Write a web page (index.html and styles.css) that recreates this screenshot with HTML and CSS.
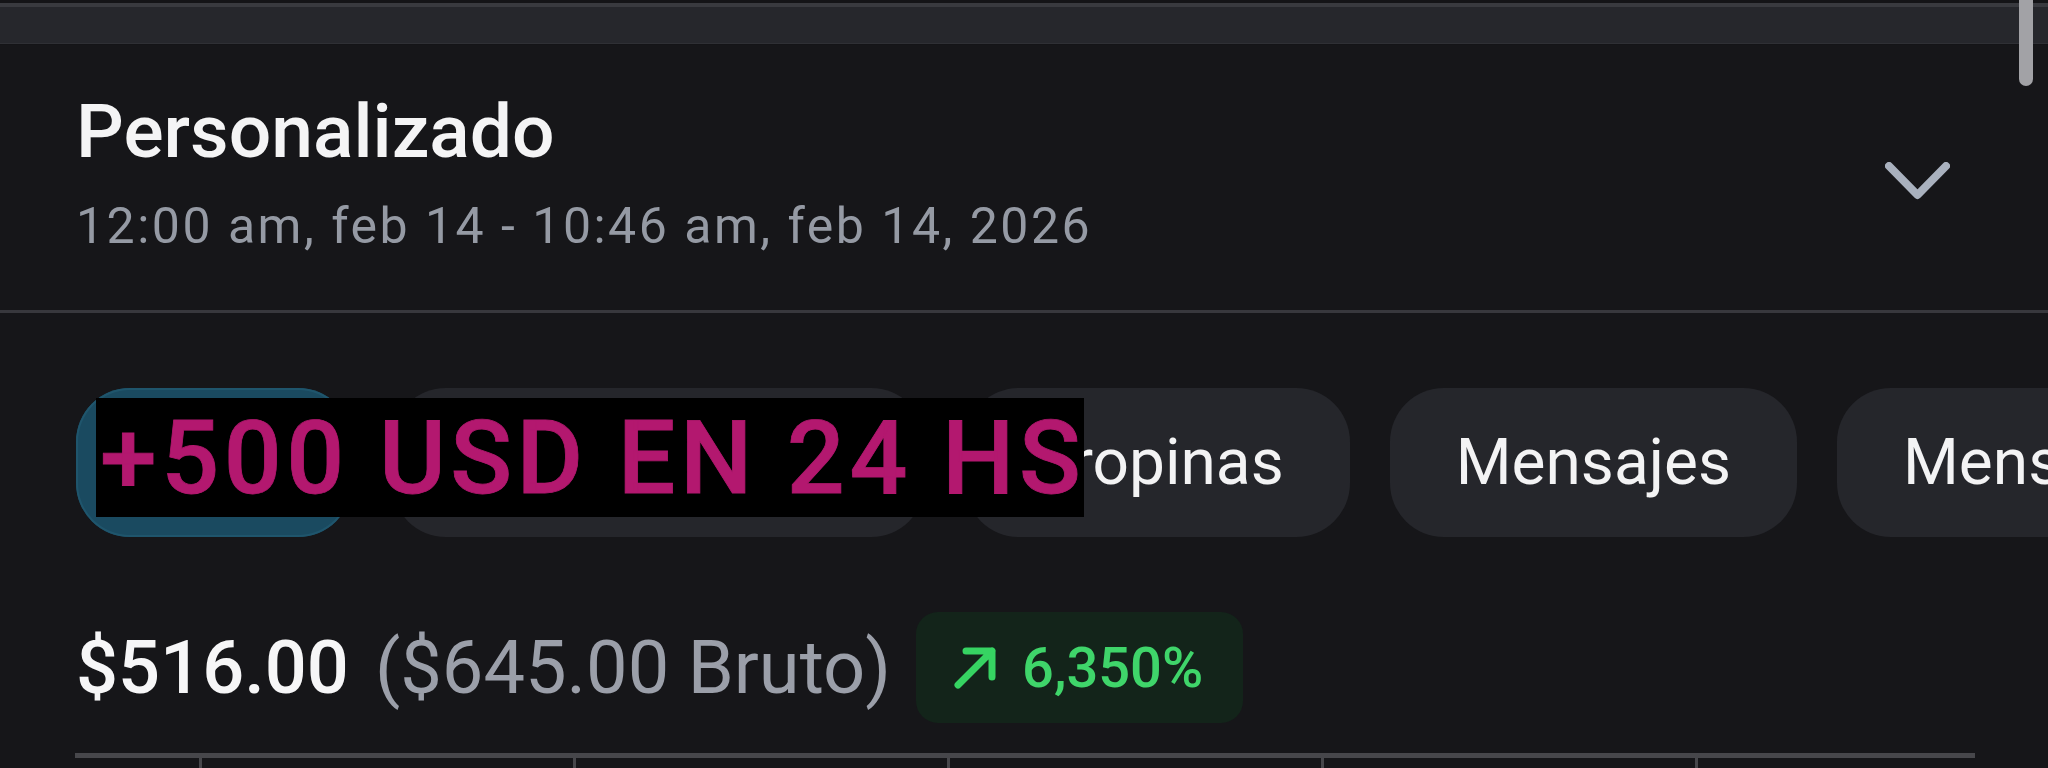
FILE: index.html
```html
<!DOCTYPE html>
<html lang="es">
<head>
<meta charset="utf-8">
<title>Ganancias</title>
<link rel="stylesheet" href="styles.css">
</head>
<body>
<div class="page">
  <div class="topbar"><div class="topbar-inner"></div></div>
  <div class="scrollbar"></div>

  <header class="range">
    <div class="range-text">
      <div class="range-title">Personalizado</div>
      <div class="range-dates">12:00 am, feb 14 - 10:46 am, feb 14, 2026</div>
    </div>
    <svg class="chevron" width="65" height="38" viewBox="0 0 65 38">
      <polyline points="4,4 32.5,33 61,4" fill="none" stroke="#a9b1be" stroke-width="8" stroke-linecap="round" stroke-linejoin="round"/>
    </svg>
  </header>

  <div class="chips-wrap">
    <div class="chips">
      <div class="chip chip-active">Todo</div>
      <div class="chip">Suscripciones</div>
      <div class="chip">Propinas</div>
      <div class="chip">Mensajes</div>
      <div class="chip">Mensajes</div>
    </div>
    <div class="promo">+500 USD EN 24 HS</div>
  </div>

  <div class="totals">
    <span class="net">$516.00</span>
    <span class="gross">($645.00 Bruto)</span>
    <span class="growth">
      <svg class="arrow" width="42" height="42" viewBox="0 0 42 42">
        <path d="M4 38 L38 4 M12 4 L38 4 L38 30" fill="none" stroke="#36d462" stroke-width="7" stroke-linecap="round" stroke-linejoin="round"/>
      </svg>
      <span class="growth-value">6,350%</span>
    </span>
  </div>

  <div class="table-head">
    <div class="col c1"></div>
    <div class="col c2"></div>
    <div class="col c2"></div>
    <div class="col c2"></div>
    <div class="col c2"></div>
    <div class="col c3"></div>
  </div>
</div>
</body>
</html>
```

FILE: styles.css
```css
html, body {
  margin: 0;
  padding: 0;
  background: #161619;
}

body {
  width: 2048px;
  height: 768px;
  overflow: hidden;
  font-family: Roboto, "Noto Sans", sans-serif;
  color: #f2f2f3;
}

.page {
  position: relative;
  width: 2048px;
  height: 768px;
  overflow: hidden;
}

.topbar {
  height: 45px;
  background: #141417;
  padding-top: 3px;
  box-sizing: border-box;
}

.topbar-inner {
  height: 41px;
  background: #26272c;
  border-top: 4px solid #393a3f;
  border-bottom: 1px solid #2f3035;
  box-sizing: border-box;
}

.scrollbar {
  position: absolute;
  top: 0;
  left: 2019px;
  width: 14px;
  height: 86px;
  border-radius: 0 0 7px 7px;
  background: #a2a2a6;
  z-index: 2;
}

.range {
  display: flex;
  align-items: flex-start;
  justify-content: space-between;
  padding: 42px 98px 54px 76px;
  border-bottom: 3px solid #38383d;
}

.range-title {
  font-size: 75px;
  line-height: 88px;
  font-weight: 500;
  color: #f4f4f5;
}

.range-dates {
  margin-top: 21px;
  font-size: 50px;
  line-height: 60px;
  letter-spacing: 2.5px;
  color: #959aa4;
}

.chevron {
  margin-top: 75px;
  display: block;
}

.chips-wrap {
  position: relative;
  margin-top: 75px;
}

.chips {
  display: flex;
  gap: 40px;
  padding-left: 76px;
}

.chip {
  flex-shrink: 0;
  height: 149px;
  padding: 0 66px;
  border-radius: 54px;
  background: #25262b;
  display: flex;
  align-items: center;
  font-size: 64px;
  color: #f3f3f4;
  box-sizing: border-box;
  white-space: nowrap;
}

.chip-active {
  background: #1a4a60;
  box-shadow: inset 0 0 0 2px #1f556c;
}

.promo {
  position: absolute;
  left: 96px;
  top: 10px;
  width: 988px;
  height: 119px;
  box-sizing: border-box;
  padding: 2px 0 0 4px;
  background: #000;
  color: #b3186f;
  font-family: Roboto, "Noto Sans", sans-serif;
  font-weight: 500;
  font-size: 102px;
  letter-spacing: 4.6px;
  line-height: 116px;
  white-space: nowrap;
  -webkit-text-stroke: 0.8px #b3186f;
}

.totals {
  display: flex;
  align-items: center;
  margin-top: 75px;
  padding-left: 76px;
  height: 111px;
}

.net {
  font-size: 74px;
  font-weight: 500;
  color: #f6f6f7;
}

.gross {
  margin-left: 26px;
  font-size: 74px;
  color: #9b9fa9;
}

.growth {
  margin-left: 25px;
  height: 111px;
  padding: 0 40px 0 38px;
  box-sizing: border-box;
  display: flex;
  align-items: center;
  gap: 26px;
  border-radius: 22px;
  background: #13241a;
}

.arrow {
  display: block;
}

.growth-value {
  font-size: 56px;
  font-weight: 500;
  color: #3fd56a;
}

.table-head {
  display: grid;
  grid-template-columns: 124px 374px 374px 374px 374px 280px;
  margin-top: 30px;
  margin-left: 75px;
  width: 1900px;
  border-top: 5px solid #47474b;
  height: 20px;
}

.col {
  border-left: 3px solid #47474b;
}

.col.c1 {
  border-left: none;
}
```
